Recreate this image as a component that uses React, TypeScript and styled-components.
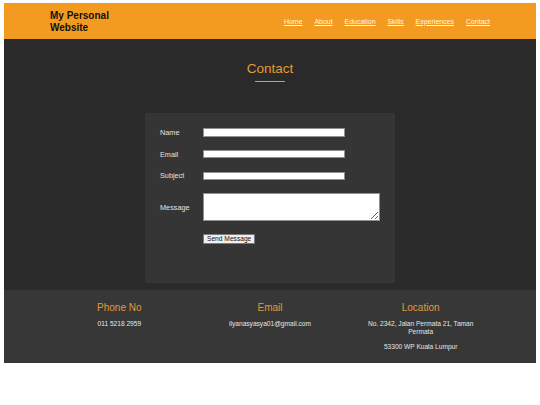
import React from "react";
import styled, { createGlobalStyle } from "styled-components";

const Global = createGlobalStyle`
  html, body { background: #ffffff; }
  body {
    margin: 3px 4px 0;
    font-family: "Liberation Sans", Arial, sans-serif;
  }
  * { box-sizing: border-box; }
`;

const Header = styled.header`
  height: 36px;
  background: #f39a21;
  display: flex;
  align-items: center;
  justify-content: space-between;
  padding: 0 46px;
`;

const Logo = styled.div`
  width: 80px;
  font-size: 10px;
  font-weight: bold;
  color: #111;
  line-height: 11.5px;
  padding-top: 1px;
`;

const Nav = styled.nav`
  display: flex;
  gap: 11.8px;
`;

const NavLink = styled.a`
  font-size: 7px;
  color: #fff8ea;
  text-decoration: underline;
  cursor: pointer;
`;

const Main = styled.main`
  background: #2a2a2a;
  padding: 21.5px 0 7px;
  display: flex;
  flex-direction: column;
  align-items: center;
`;

const Title = styled.h2`
  margin: 0;
  font-size: 13.5px;
  font-weight: normal;
  line-height: 15.5px;
  color: #e59b33;
`;

const Underline = styled.div`
  width: 30px;
  height: 1px;
  background: #e59b33;
  margin-top: 5px;
`;

const Panel = styled.form`
  margin-top: 31px;
  width: 250px;
  height: 170px;
  background: #353535;
  padding: 15px 15px 0;
  display: grid;
  grid-template-columns: 43px auto;
  row-gap: 12.7px;
  align-items: center;
  align-content: start;
`;

const Label = styled.label`
  font-size: 7.3px;
  color: #e2e2e2;
`;

const Input = styled.input`
  width: 142px;
  height: 8.6px;
  border: 1px solid #8f8f8f;
  background: #fff;
  padding: 0;
  margin: 0;
  display: block;
`;

const TextArea = styled.textarea`
  width: 177.4px;
  height: 28px;
  border: 1px solid #8f8f8f;
  background: #fff;
  padding: 0;
  margin: 0;
  display: block;
`;

const Button = styled.button`
  grid-column: 2;
  justify-self: start;
  height: 10px;
  padding: 0 3px;
  font-family: "Liberation Sans", Arial, sans-serif;
  font-size: 6.65px;
  line-height: 8px;
  color: #111;
  background: #f0f0f0;
  border: 1px solid #7a7a7a;
  border-radius: 0;
`;

const Footer = styled.footer`
  background: #373737;
  padding: 11.7px 40px 12.8px;
  display: grid;
  grid-template-columns: repeat(3, 1fr);
`;

const Column = styled.div`
  padding: 0 15px;
  text-align: center;
`;

const ColTitle = styled.h3`
  margin: 0 0 7.3px;
  font-size: 10px;
  font-weight: normal;
  line-height: 11.5px;
  color: #e29a36;
`;

const ColText = styled.p`
  margin: 0;
  font-size: 6.6px;
  line-height: 7.6px;
  color: #e6e6e6;
  & + & { margin-top: 7.2px; }
`;

const links = ["Home", "About", "Education", "Skills", "Experiences", "Contact"];

export default function App() {
  return (
    <>
      <Global />
      <Header>
        <Logo>My Personal Website</Logo>
        <Nav>
          {links.map((l) => (
            <NavLink key={l}>{l}</NavLink>
          ))}
        </Nav>
      </Header>
      <Main>
        <Title>Contact</Title>
        <Underline />
        <Panel onSubmit={(e) => e.preventDefault()}>
          <Label>Name</Label>
          <Input type="text" />
          <Label>Email</Label>
          <Input type="email" />
          <Label>Subject</Label>
          <Input type="text" />
          <Label>Message</Label>
          <TextArea />
          <Button type="submit">Send Message</Button>
        </Panel>
      </Main>
      <Footer>
        <Column>
          <ColTitle>Phone No</ColTitle>
          <ColText>011 5218 2959</ColText>
        </Column>
        <Column>
          <ColTitle>Email</ColTitle>
          <ColText>ilyanasyasya01@gmail.com</ColText>
        </Column>
        <Column>
          <ColTitle>Location</ColTitle>
          <ColText>No. 2342, Jalan Permata 21, Taman Permata</ColText>
          <ColText>53300 WP Kuala Lumpur</ColText>
        </Column>
      </Footer>
    </>
  );
}
